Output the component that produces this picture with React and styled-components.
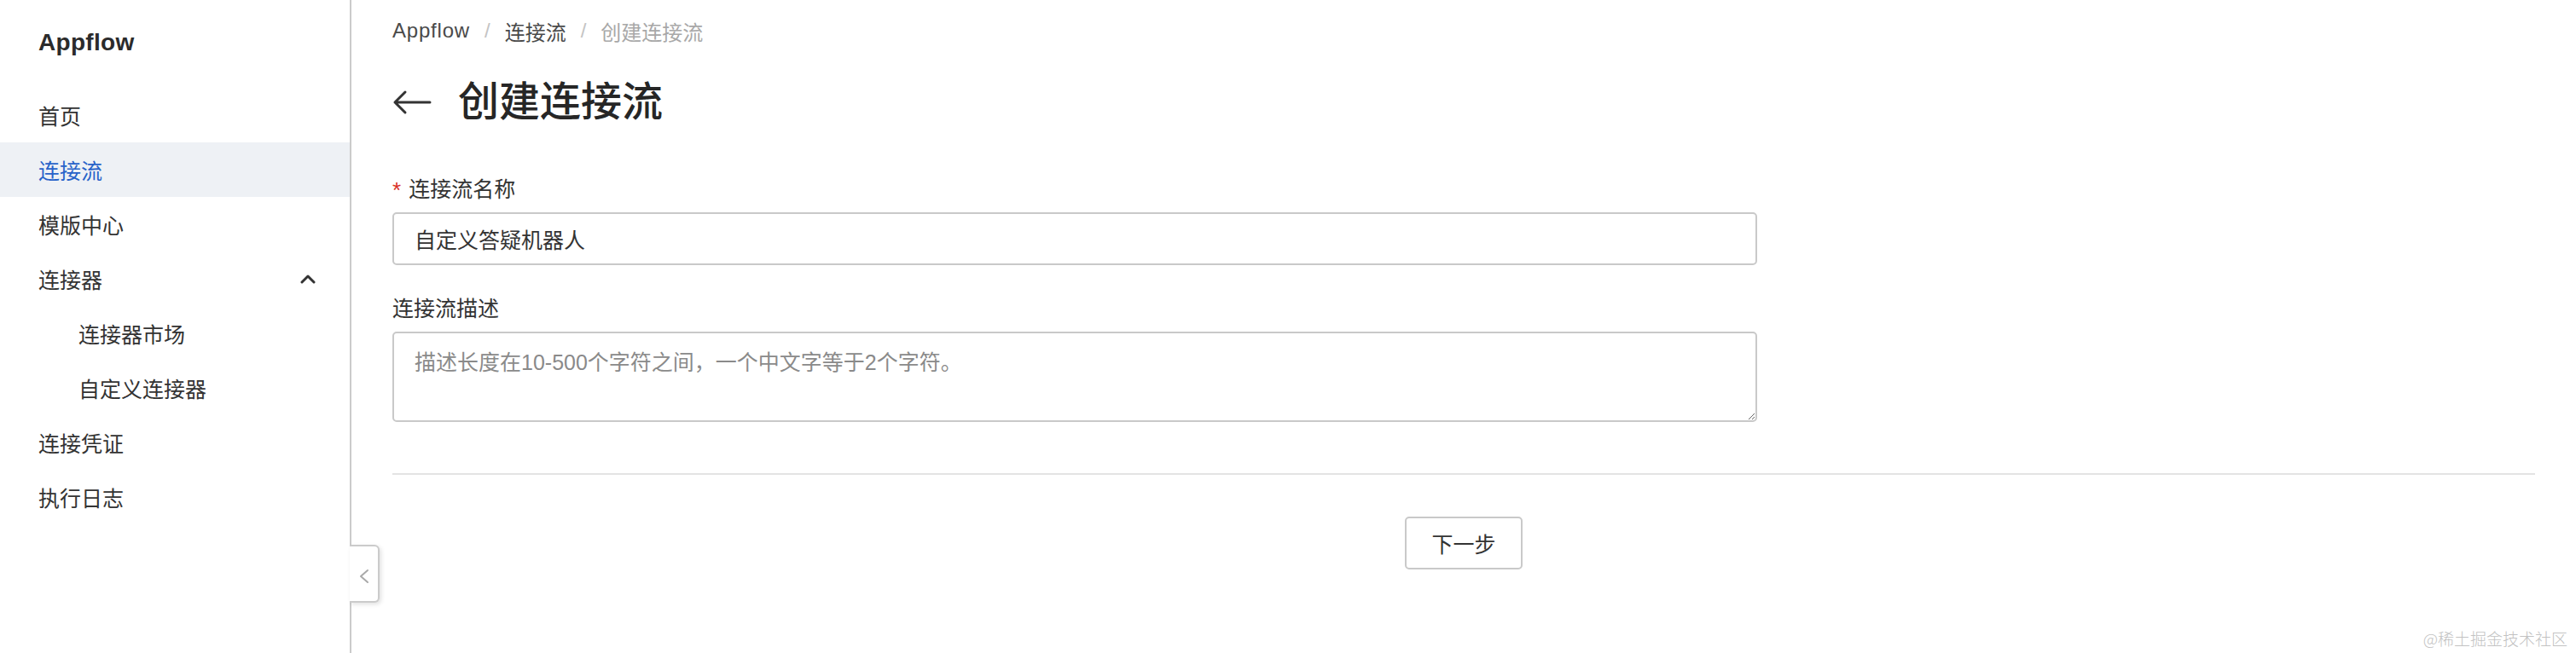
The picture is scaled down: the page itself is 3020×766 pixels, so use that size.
import React from 'react';
import styled, { createGlobalStyle } from 'styled-components';

const GlobalStyle = createGlobalStyle`
    html, body {
        margin: 0;
        padding: 0;
        background: #fff;
    }
    body {
        font-family: "Liberation Sans", "Noto Sans CJK SC", sans-serif;
        color: #333;
    }
    * {
        box-sizing: border-box;
    }
`

const Layout = styled.div`
    position: relative;
    display: flex;
    width: 3020px;
    height: 766px;
    overflow: hidden;
`

const Sidebar = styled.aside`
    position: relative;
    width: 412px;
    flex-shrink: 0;
    border-right: 2px solid #cbcbcb;
`

const Logo = styled.div`
    height: 100px;
    display: flex;
    align-items: center;
    padding-left: 45px;
    font-size: 28px;
    font-weight: 700;
    color: #2b2b2b;
    letter-spacing: 0.3px;
`

const Menu = styled.nav`
    margin-top: 3px;
`

const MenuItem = styled.div`
    height: 64px;
    display: flex;
    align-items: center;
    justify-content: space-between;
    padding-left: ${p => (p.$sub ? '92px' : '45px')};
    padding-right: 40px;
    font-size: 25px;
    color: ${p => (p.$active ? '#2863c9' : '#333')};
    background: ${p => (p.$active ? '#eef1f5' : 'transparent')};
`

const CollapseToggle = styled.div`
    position: absolute;
    left: 410px;
    top: 639px;
    width: 35px;
    height: 68px;
    display: flex;
    align-items: center;
    justify-content: center;
    background: #fff;
    border: 2px solid #cbcbcb;
    border-left: none;
    border-radius: 0 6px 6px 0;
    box-shadow: 2px 2px 5px rgba(0, 0, 0, 0.12);
    padding-top: 6px;
`

const Main = styled.main`
    flex: 1;
    padding: 18px 48px 0 48px;
`

const Breadcrumb = styled.div`
    display: flex;
    align-items: center;
    height: 36px;
    font-size: 24px;
    color: #555;
`

const Crumb = styled.span`
    color: ${p => (p.$current ? '#a8a8a8' : '#4a4a4a')};
    letter-spacing: ${p => (p.$latin ? '0.8px' : '0')};
`

const Sep = styled.span`
    margin: 0 17px;
    color: #c4c4c4;
`

const TitleRow = styled.div`
    display: flex;
    align-items: center;
    height: 64px;
    margin-top: 34px;
    gap: 31px;
`

const Title = styled.h1`
    margin: 0;
    font-size: 48px;
    font-weight: 500;
    color: #262626;
    line-height: 64px;
`

const Field = styled.div`
    display: flex;
    flex-direction: column;
    gap: 11px;
    margin-top: ${p => p.$top || '0'};
`

const Label = styled.label`
    display: flex;
    align-items: center;
    height: 36px;
    font-size: 25px;
    color: #333;
`

const Required = styled.span`
    color: #d93026;
    font-size: 26px;
    margin-right: 9px;
    padding-top: 6px;
`

const TextInput = styled.input`
    width: 1600px;
    height: 62px;
    padding: 0 24px;
    border: 2px solid #c9c9c9;
    border-radius: 5px;
    font-family: inherit;
    font-size: 25px;
    color: #333;
    outline: none;
    background: #fff;
`

const TextArea = styled.textarea`
    width: 1600px;
    height: 106px;
    padding: 16px 24px;
    border: 2px solid #c9c9c9;
    border-radius: 5px;
    font-family: inherit;
    font-size: 25px;
    line-height: 36px;
    color: #333;
    outline: none;
    background: #fff;
    &::placeholder {
        color: #8a8a8a;
    }
`

const Divider = styled.hr`
    margin: 60px 0 0 0;
    border: none;
    border-top: 2px solid #e3e3e3;
`

const Footer = styled.div`
    display: flex;
    justify-content: center;
    margin-top: 49px;
`

const Button = styled.button`
    width: 138px;
    height: 62px;
    border: 2px solid #c9c9c9;
    border-radius: 5px;
    background: #fff;
    font-family: inherit;
    font-size: 25px;
    color: #333;
`

const Watermark = styled.div`
    position: absolute;
    right: 10px;
    bottom: 4px;
    font-size: 19px;
    color: #c2c2c2;
    font-family: "Noto Sans CJK SC", sans-serif;
    font-weight: 300;
`

const ChevronUp = () => (
    <svg width="18" height="12" viewBox="0 0 18 12" fill="none">
        <path d="M2 10 L9 3 L16 10" stroke="#333" strokeWidth="3" strokeLinecap="round" strokeLinejoin="round" />
    </svg>
)

const ChevronLeft = () => (
    <svg width="14" height="18" viewBox="0 0 14 18" fill="none">
        <path d="M11 2 L3 9 L11 16" stroke="#a9a9a9" strokeWidth="2" strokeLinecap="round" strokeLinejoin="round" />
    </svg>
)

const BackArrow = () => (
    <svg width="46" height="30" viewBox="0 0 46 30" fill="none">
        <path d="M44 15 H3 M15 3 L3 15 L15 27" stroke="#333" strokeWidth="3" strokeLinecap="round" strokeLinejoin="round" />
    </svg>
)

const menu = [
    { label: '首页' },
    { label: '连接流', active: true },
    { label: '模版中心' },
    { label: '连接器', open: true },
    { label: '连接器市场', sub: true },
    { label: '自定义连接器', sub: true },
    { label: '连接凭证' },
    { label: '执行日志' },
]

export default function App() {
    return (
        <>
            <GlobalStyle />
            <Layout>
                <Sidebar>
                    <Logo>Appflow</Logo>
                    <Menu>
                        {menu.map(item => (
                            <MenuItem key={item.label} $active={item.active} $sub={item.sub}>
                                <span>{item.label}</span>
                                {item.open && <ChevronUp />}
                            </MenuItem>
                        ))}
                    </Menu>
                </Sidebar>
                <CollapseToggle>
                    <ChevronLeft />
                </CollapseToggle>

                <Main>
                    <Breadcrumb>
                        <Crumb $latin>Appflow</Crumb>
                        <Sep>/</Sep>
                        <Crumb>连接流</Crumb>
                        <Sep>/</Sep>
                        <Crumb $current>创建连接流</Crumb>
                    </Breadcrumb>

                    <TitleRow>
                        <BackArrow />
                        <Title>创建连接流</Title>
                    </TitleRow>

                    <Field $top="50px">
                        <Label>
                            <Required>*</Required>
                            连接流名称
                        </Label>
                        <TextInput defaultValue="自定义答疑机器人" />
                    </Field>

                    <Field $top="31px">
                        <Label>连接流描述</Label>
                        <TextArea placeholder="描述长度在10-500个字符之间，一个中文字等于2个字符。" />
                    </Field>

                    <Divider />

                    <Footer>
                        <Button>下一步</Button>
                    </Footer>
                </Main>

                <Watermark>@稀土掘金技术社区</Watermark>
            </Layout>
        </>
    )
}
